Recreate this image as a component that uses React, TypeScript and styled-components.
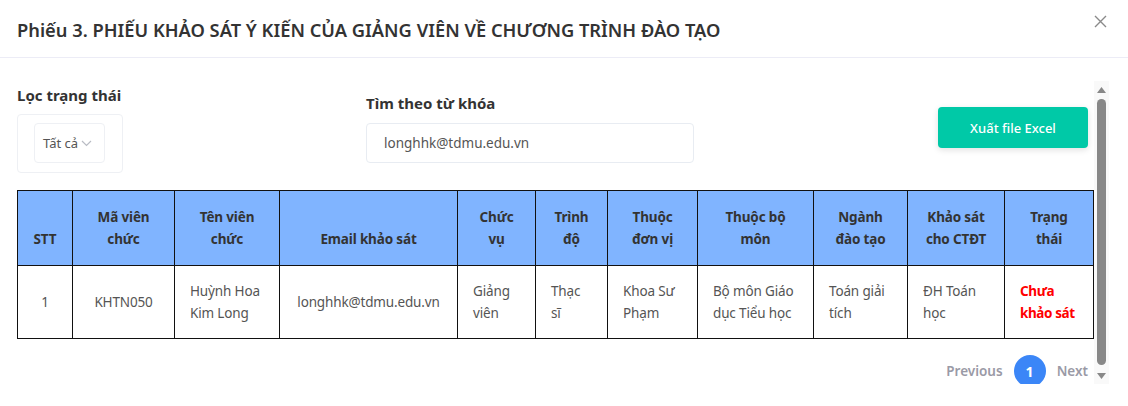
import styled, { createGlobalStyle } from "styled-components";

const GlobalStyle = createGlobalStyle`
  html, body {
    margin: 0;
    padding: 0;
    background: #ffffff;
  }
  body {
    font-family: "Noto Sans", "Open Sans", sans-serif;
    color: #333333;
  }
`;

interface Column {
  title: string;
  width: number;
  center?: boolean;
}

const columns: Column[] = [
  { title: "STT", width: 55, center: true },
  { title: "Mã viên chức", width: 102, center: true },
  { title: "Tên viên chức", width: 105 },
  { title: "Email khảo sát", width: 178, center: true },
  { title: "Chức vụ", width: 78 },
  { title: "Trình độ", width: 72 },
  { title: "Thuộc đơn vị", width: 90 },
  { title: "Thuộc bộ môn", width: 116 },
  { title: "Ngành đào tạo", width: 94 },
  { title: "Khảo sát cho CTĐT", width: 97 },
  { title: "Trạng thái", width: 89 },
];

const rows = [
  [
    "1",
    "KHTN050",
    "Huỳnh Hoa Kim Long",
    "longhhk@tdmu.edu.vn",
    "Giảng viên",
    "Thạc sĩ",
    "Khoa Sư Phạm",
    "Bộ môn Giáo dục Tiểu học",
    "Toán giải tích",
    "ĐH Toán học",
    "Chưa khảo sát",
  ],
];

const App = () => {
  return (
    <>
      <GlobalStyle />
      <Modal>
        <Header>
          <Title>Phiếu 3. PHIẾU KHẢO SÁT Ý KIẾN CỦA GIẢNG VIÊN VỀ CHƯƠNG TRÌNH ĐÀO TẠO</Title>
          <CloseButton aria-label="Đóng">
            <svg width="13" height="13" viewBox="0 0 13 13">
              <path d="M1 1L12 12M12 1L1 12" stroke="#8a8a8a" strokeWidth="1.4" fill="none" />
            </svg>
          </CloseButton>
        </Header>

        <Body>
          <Content>
            <Toolbar>
              <FilterGroup>
                <Label>Lọc trạng thái</Label>
                <SelectFrame>
                  <Select>
                    Tất cả
                    <svg width="11" height="7" viewBox="0 0 11 7">
                      <path d="M1 1L5.5 5.5L10 1" stroke="#b9bcc4" strokeWidth="1.2" fill="none" />
                    </svg>
                  </Select>
                </SelectFrame>
              </FilterGroup>

              <SearchGroup>
                <Label>Tìm theo từ khóa</Label>
                <SearchInput defaultValue="longhhk@tdmu.edu.vn" />
              </SearchGroup>

              <ExportButton>Xuất file Excel</ExportButton>
            </Toolbar>

            <Table>
              <colgroup>
                {columns.map((c) => (
                  <col key={c.title} style={{ width: c.width }} />
                ))}
              </colgroup>
              <thead>
                <tr>
                  {columns.map((c) => (
                    <Th key={c.title}>{c.title}</Th>
                  ))}
                </tr>
              </thead>
              <tbody>
                {rows.map((row) => (
                  <tr key={row[0]}>
                    {row.map((cell, i) => (
                      <Td key={i} center={columns[i].center} status={i === row.length - 1}>
                        {cell}
                      </Td>
                    ))}
                  </tr>
                ))}
              </tbody>
            </Table>

            <Pagination>
              <PageLink>Previous</PageLink>
              <PageNumber>1</PageNumber>
              <PageLink>Next</PageLink>
            </Pagination>
          </Content>

          <ScrollRail>
            <ScrollArrow>
              <svg width="9" height="6" viewBox="0 0 9 6">
                <path d="M4.5 0L9 6H0z" fill="#888888" />
              </svg>
            </ScrollArrow>
            <ScrollThumb />
            <ScrollArrow>
              <svg width="9" height="6" viewBox="0 0 9 6">
                <path d="M0 0H9L4.5 6z" fill="#888888" />
              </svg>
            </ScrollArrow>
          </ScrollRail>
        </Body>
      </Modal>
    </>
  );
};

const Modal = styled.div`
  width: 1128px;
  height: 406px;
  background: #ffffff;
  overflow: hidden;
`;

const Header = styled.div`
  height: 58px;
  display: flex;
  align-items: center;
  justify-content: space-between;
  padding: 0 21px 0 17px;
  border-bottom: 1px solid #ececf6;
  box-sizing: border-box;
`;

const Title = styled.h2`
  margin: 0;
  margin-top: 1px;
  font-size: 18.3px;
  font-weight: 600;
  color: #333333;
`;

const CloseButton = styled.button`
  border: none;
  background: none;
  padding: 0;
  margin-top: -14px;
  display: flex;
  cursor: pointer;
`;

const Body = styled.div`
  display: flex;
  padding: 23px 19px 0 0;
`;

const Content = styled.div`
  width: 1077px;
  height: 303px;
  overflow: hidden;
  padding-left: 17px;
`;

const ScrollRail = styled.div`
  width: 15px;
  height: 303px;
  display: flex;
  flex-direction: column;
  background: #f9f9f9;
`;

const ScrollArrow = styled.div`
  height: 17px;
  display: flex;
  align-items: center;
  justify-content: center;
`;

const ScrollThumb = styled.div`
  flex: 1;
  margin: 1px 3px 2px;
  border-radius: 5px;
  background: #888888;
`;

const Toolbar = styled.div`
  display: flex;
  align-items: flex-start;
  padding-top: 4px;
  padding-right: 6px;
`;

const FilterGroup = styled.div`
  width: 349px;
  display: flex;
  flex-direction: column;
  align-items: flex-start;
`;

const SearchGroup = styled.div`
  margin-top: 8px;
  display: flex;
  flex-direction: column;
`;

const Label = styled.div`
  font-size: 15px;
  font-weight: 700;
  line-height: 20px;
  color: #333333;
`;

const SelectFrame = styled.div`
  margin-top: 9px;
  padding: 8px 17px 9px 16px;
  border: 1px solid #eef0f4;
  border-radius: 4px;
`;

const Select = styled.div`
  width: 71px;
  height: 40px;
  box-sizing: border-box;
  display: flex;
  align-items: center;
  gap: 3px;
  padding-left: 8px;
  border: 1px solid #eef0f4;
  border-radius: 4px;
  font-size: 13px;
  color: #555555;

  svg {
    margin-top: 1px;
  }
`;

const SearchInput = styled.input`
  margin-top: 10px;
  width: 328px;
  height: 40px;
  box-sizing: border-box;
  padding: 0 17px;
  border: 1px solid #e8ecf2;
  border-radius: 4px;
  font-family: inherit;
  font-size: 13.5px;
  color: #555555;
  outline: none;
`;

const ExportButton = styled.button`
  margin-left: auto;
  margin-top: 22px;
  width: 150px;
  height: 41px;
  border: none;
  border-radius: 4px;
  background: #00c9a7;
  color: #ffffff;
  font-family: inherit;
  font-size: 13px;
  font-weight: 500;
  box-shadow: 0 2px 6px rgba(0, 0, 0, 0.12);
  cursor: pointer;
`;

const Table = styled.table`
  margin-top: 17px;
  width: 1076px;
  table-layout: fixed;
  border-collapse: collapse;
  font-size: 13.5px;
  line-height: 22px;
  letter-spacing: -0.15px;
`;

const Th = styled.th`
  background: #80b4ff;
  border: 1px solid #111111;
  padding: 15px 12px;
  font-weight: 700;
  color: #333333;
  text-align: center;
  vertical-align: bottom;
`;

const Td = styled.td<{ center?: boolean; status?: boolean }>`
  border: 1px solid #111111;
  padding: 14px 15px;
  text-align: ${({ center }) => (center ? "center" : "left")};
  color: ${({ status }) => (status ? "#ff0000" : "#555555")};
  font-weight: ${({ status }) => (status ? 700 : 400)};
  letter-spacing: ${({ status }) => (status ? "-0.4px" : "-0.15px")};
`;

const Pagination = styled.div`
  display: flex;
  align-items: center;
  justify-content: flex-end;
  gap: 11px;
  margin-top: 16px;
  padding-right: 6px;
  padding-bottom: 8px;
`;

const PageLink = styled.span`
  font-size: 13.5px;
  font-weight: 600;
  color: #9a9aa6;
`;

const PageNumber = styled.span`
  width: 32px;
  height: 32px;
  border-radius: 50%;
  background: #3b86f7;
  color: #ffffff;
  font-size: 14px;
  font-weight: 700;
  display: flex;
  align-items: center;
  justify-content: center;
`;

export default App;
